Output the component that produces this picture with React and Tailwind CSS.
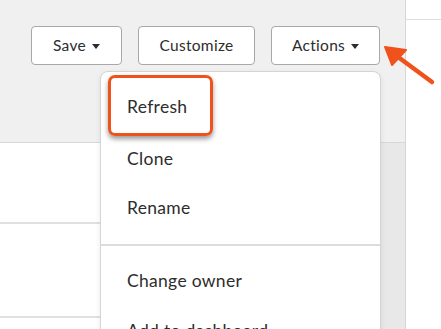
import React from "react";

const Caret = () => (
  <svg width="8" height="5" viewBox="0 0 8 5" className="ml-[6px] mt-[1px]">
    <path d="M0 0 L8 0 L4 5 Z" fill="#2d2d2d" />
  </svg>
);

export default function App() {
  const font = { fontFamily: "Lato, 'Noto Sans', sans-serif" };
  return (
    <div className="relative w-[441px] h-[329px] overflow-hidden bg-white flex text-[#2d2d2d]" style={font}>
      <div className="w-[406px] h-full border-r border-[#d6d6d6] flex flex-col">
        <div className="h-[143px] bg-[#f0f0f0] border-b border-[#d8d8d8] flex justify-end items-start pt-[26px] pr-[25px] gap-[16px]">
          <button className="w-[91px] h-[39px] bg-white border border-[#a8a8a8] rounded-[4px] flex items-center justify-center text-[15.5px] tracking-[0.3px]">
            Save<Caret />
          </button>
          <button className="w-[117px] h-[39px] bg-white border border-[#a8a8a8] rounded-[4px] flex items-center justify-center text-[15.5px] tracking-[0.3px]">
            Customize
          </button>
          <button className="w-[109px] h-[39px] bg-white border border-[#a8a8a8] rounded-[4px] flex items-center justify-center text-[15.5px] tracking-[0.3px]">
            Actions<Caret />
          </button>
        </div>
        <div className="flex-1 flex">
          <div className="w-[380px] flex flex-col">
            <div className="h-[81px] border-b-2 border-[#e0e0e0] bg-gradient-to-r from-white via-white to-[#f6f6f6]" />
            <div className="h-[94px] border-b-2 border-[#e0e0e0] bg-gradient-to-r from-white via-white to-[#f6f6f6]" />
            <div className="flex-1" />
          </div>
          <div className="flex-1 bg-[#e8e8e8] border-l border-[#dcdcdc]" />
        </div>
      </div>
      <div className="flex-1 flex flex-col">
        <div className="h-[20px] border-b border-[#dedede]" />
      </div>

      <div className="absolute left-[100px] top-[71px] w-[281px] h-[280px] bg-white border border-[#d4d4d4] rounded-t-[8px] shadow-[0_2px_6px_rgba(0,0,0,0.08)] text-[17.5px] tracking-[0.3px]">
        <div className="pt-[3px] pl-[7px]">
          <div className="w-[105px] h-[61px] border-[3px] border-[#f0521c] rounded-[7px] shadow-[0_3px_5px_rgba(0,0,0,0.4)] flex items-center pl-[16px] pt-[3px]">
            Refresh
          </div>
        </div>
        <div className="pl-[26px] leading-[20px]">
          <div className="mt-[13px]">Clone</div>
          <div className="mt-[29px]">Rename</div>
        </div>
        <div className="mt-[26px] border-t-2 border-[#dcdcdc]" />
        <div className="pl-[26px] leading-[20px]">
          <div className="mt-[25px]">Change owner</div>
          <div className="mt-[30px]">Add to dashboard</div>
        </div>
      </div>

      <svg className="absolute left-[380px] top-[40px]" width="60" height="50" viewBox="0 0 60 50">
        <line x1="52" y1="42" x2="14" y2="14" stroke="#f0521c" strokeWidth="4.5" strokeLinecap="round" />
        <path d="M5 7 L26 10 L12 25 Z" fill="#f0521c" stroke="#f0521c" strokeWidth="2" strokeLinejoin="round" />
      </svg>
    </div>
  );
}
